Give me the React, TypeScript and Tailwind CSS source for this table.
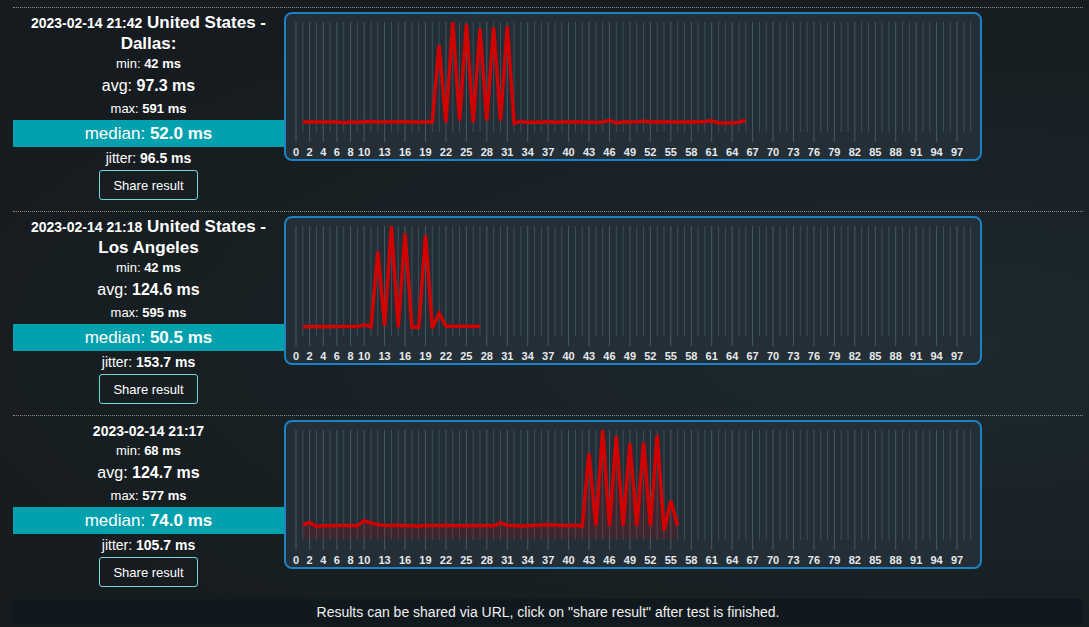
import React from "react";

const FONT = '"Liberation Sans", Arial, sans-serif';

const STEP = 6.815;
const X0 = 10;
const TOP = 8;
const BOTTOM = 117;

const labeled = new Set<number>([0, 2, 4, 6, 8, 10]);
for (let i = 13; i < 100; i += 3) labeled.add(i);

type ChartProps = { data: number[]; max: number; fill?: boolean };

function Chart({ data, max, fill }: ChartProps) {
  const pts = data.map((v, i) => {
    const x = X0 + (i + 1) * STEP;
    const y = BOTTOM - (v / max) * (BOTTOM - TOP);
    return [x, y] as [number, number];
  });
  const d = pts.map((p, i) => `${i === 0 ? "M" : "L"}${p[0].toFixed(1)},${p[1].toFixed(1)}`).join(" ");
  const fillD =
    d +
    ` L${pts[pts.length - 1][0].toFixed(1)},${BOTTOM} L${pts[0][0].toFixed(1)},${BOTTOM} Z`;
  const lines = [];
  for (let i = 0; i < 100; i++) {
    const x = X0 + i * STEP;
    const isL = labeled.has(i);
    lines.push(
      <line
        key={i}
        x1={x}
        x2={x}
        y1={TOP}
        y2={isL ? 128 : 118}
        stroke={isL ? "#435c69" : "#3a505c"}
        strokeWidth={1}
      />
    );
  }
  return (
    <div className="w-[698px] h-[149px] shrink-0 border-2 border-[#1b82c4] rounded-[8px] bg-[#232e36] overflow-hidden">
      <svg width={694} height={145} viewBox="0 0 694 145" className="block">
        {lines}
        {fill && <path d={fillD} fill="rgba(200,0,0,0.16)" />}
        <path d={d} fill="none" stroke="#d20000" strokeWidth={3.5} strokeLinejoin="miter" />
        {Array.from(labeled).map((i) => (
          <text
            key={i}
            x={X0 + i * STEP}
            y={142}
            textAnchor="middle"
            fontFamily={FONT}
            fontWeight="bold"
            fontSize={11}
            fill="#e6e9eb"
          >
            {i}
          </text>
        ))}
      </svg>
    </div>
  );
}

const dallas = [
  50, 49, 48, 47, 49, 48, 45, 48, 46, 50, 51, 49, 49, 49, 50, 50, 49, 49, 49, 49,
  465, 45, 591, 56, 580, 45, 557, 56, 562, 56, 569, 42, 52, 46, 49, 47, 52, 46, 49, 49,
  50, 49, 47, 46, 48, 58, 44, 49, 48, 50, 55, 49, 50, 49, 48, 49, 49, 50, 48, 51,
  55, 44, 43, 44, 47, 58,
];

const la = [
  45, 45, 45, 47, 45, 45, 46, 46, 46, 55, 44, 455, 49, 595, 42, 555, 42, 42, 544, 37,
  118, 49, 47, 48, 48, 47, 48,
];

const nr3 = [
  74, 88, 68, 70, 70, 72, 72, 71, 70, 97, 85, 76, 72, 72, 73, 72, 70, 68, 73, 71,
  72, 73, 72, 70, 70, 71, 71, 71, 70, 86, 72, 71, 69, 71, 72, 74, 75, 74, 72, 72,
  73, 68, 454, 70, 577, 70, 545, 70, 506, 68, 510, 70, 551, 45, 203, 70,
];

type Row = {
  date: string;
  place?: string;
  min: string;
  avg: string;
  max: string;
  median: string;
  jitter: string;
  data: number[];
  dmax: number;
  fill?: boolean;
};

const rows: Row[] = [
  {
    date: "2023-02-14 21:42",
    place: "United States - Dallas:",
    min: "42 ms",
    avg: "97.3 ms",
    max: "591 ms",
    median: "52.0 ms",
    jitter: "96.5 ms",
    data: dallas,
    dmax: 591,
  },
  {
    date: "2023-02-14 21:18",
    place: "United States - Los Angeles",
    min: "42 ms",
    avg: "124.6 ms",
    max: "595 ms",
    median: "50.5 ms",
    jitter: "153.7 ms",
    data: la,
    dmax: 595,
  },
  {
    date: "2023-02-14 21:17",
    min: "68 ms",
    avg: "124.7 ms",
    max: "577 ms",
    median: "74.0 ms",
    jitter: "105.7 ms",
    data: nr3,
    dmax: 577,
    fill: true,
  },
];

export default function App() {
  return (
    <div
      className="min-h-screen w-full bg-[radial-gradient(ellipse_at_85%_55%,#1d292e_0%,#182125_45%,#161b1f_80%)] pt-[7px] text-white"
      style={{ fontFamily: FONT }}
    >
      <div className="ml-[13px] w-[1070px]">
        {rows.map((r, idx) => (
          <div
            key={idx}
            className="border-t border-dotted border-[#8c8c8c] pt-[4px] pb-[11px] flex items-start"
          >
            <div className="w-[271px] shrink-0 flex flex-col items-center">
              <div className="w-full text-center font-bold text-[17px] leading-[21px] px-[2px]">
                <span className="text-[14px] leading-none">{r.date}</span>
                {r.place && <span className="leading-none"> {r.place}</span>}
              </div>
              <div className="text-[13px] leading-[20px]">
                min: <b>{r.min}</b>
              </div>
              <div className="text-[16px] leading-[24px]">
                avg: <b>{r.avg}</b>
              </div>
              <div className="text-[13px] leading-[22px]">
                max: <b>{r.max}</b>
              </div>
              <div className="w-full h-[27px] bg-[#02a1ad] flex items-center justify-center text-[17px] leading-none">
                <span>
                  median: <b>{r.median}</b>
                </span>
              </div>
              <div className="text-[14px] leading-[22px]">
                jitter: <b>{r.jitter}</b>
              </div>
              <button className="mt-[1px] h-[30px] px-[13px] border border-[#72d5dd] rounded-[3px] text-[13px] leading-none text-white bg-transparent">
                Share result
              </button>
            </div>
            <Chart data={r.data} max={r.dmax} fill={r.fill} />
          </div>
        ))}
        <div className="mt-[1px] h-[26px] bg-[#10191d] flex items-center justify-center text-[14px] text-[#f0f0f0]">
          Results can be shared via URL, click on "share result" after test is finished.
        </div>
      </div>
    </div>
  );
}
